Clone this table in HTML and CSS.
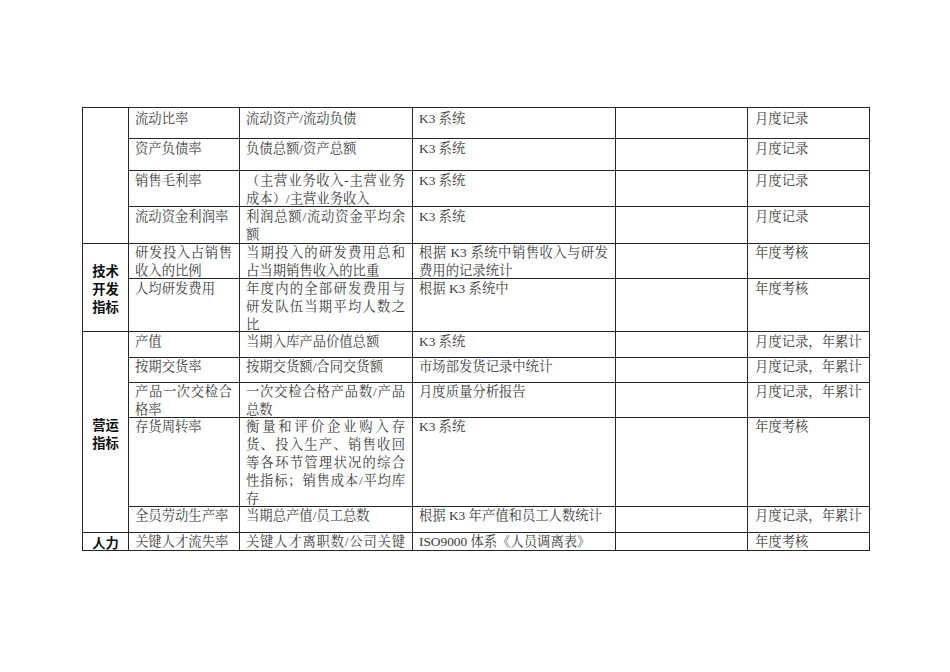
FILE: index.html
```html
<!DOCTYPE html>
<html lang="zh-CN">
<head>
<meta charset="utf-8">
<title>指标表</title>
<link rel="stylesheet" href="styles.css">
</head>
<body>
<div class="sheet">
  <div class="cell cat span4"></div>
  <div class="cell t1">流动比率</div>
  <div class="cell t1">流动资产/流动负债</div>
  <div class="cell t1">K3 系统</div>
  <div class="cell t1"></div>
  <div class="cell t1 last">月度记录</div>

  <div class="cell">资产负债率</div>
  <div class="cell">负债总额/资产总额</div>
  <div class="cell">K3 系统</div>
  <div class="cell"></div>
  <div class="cell last">月度记录</div>

  <div class="cell">销售毛利率</div>
  <div class="cell">（主营业务收入-主营业务成本）/主营业务收入</div>
  <div class="cell">K3 系统</div>
  <div class="cell"></div>
  <div class="cell last">月度记录</div>

  <div class="cell">流动资金利润率</div>
  <div class="cell">利润总额/流动资金平均余额</div>
  <div class="cell">K3 系统</div>
  <div class="cell"></div>
  <div class="cell last">月度记录</div>

  <div class="cell cat span2">技术开发指标</div>
  <div class="cell tight">研发投入占销售收入的比例</div>
  <div class="cell tight">当期投入的研发费用总和占当期销售收入的比重</div>
  <div class="cell tight">根据 K3 系统中销售收入与研发费用的记录统计</div>
  <div class="cell tight"></div>
  <div class="cell tight last">年度考核</div>

  <div class="cell">人均研发费用</div>
  <div class="cell">年度内的全部研发费用与研发队伍当期平均人数之比</div>
  <div class="cell">根据 K3 系统中</div>
  <div class="cell"></div>
  <div class="cell last">年度考核</div>

  <div class="cell cat span5">营运指标</div>
  <div class="cell">产值</div>
  <div class="cell">当期入库产品价值总额</div>
  <div class="cell">K3 系统</div>
  <div class="cell"></div>
  <div class="cell last">月度记录，年累计</div>

  <div class="cell tight">按期交货率</div>
  <div class="cell tight">按期交货额/合同交货额</div>
  <div class="cell tight">市场部发货记录中统计</div>
  <div class="cell tight"></div>
  <div class="cell tight last">月度记录，年累计</div>

  <div class="cell tight">产品一次交检合格率</div>
  <div class="cell tight">一次交检合格产品数/产品总数</div>
  <div class="cell tight">月度质量分析报告</div>
  <div class="cell tight"></div>
  <div class="cell tight last">月度记录，年累计</div>

  <div class="cell tight">存货周转率</div>
  <div class="cell tight">衡量和评价企业购入存货、投入生产、销售收回等各环节管理状况的综合性指标；销售成本/平均库存</div>
  <div class="cell tight">K3 系统</div>
  <div class="cell tight"></div>
  <div class="cell tight last">年度考核</div>

  <div class="cell tight">全员劳动生产率</div>
  <div class="cell tight">当期总产值/员工总数</div>
  <div class="cell tight">根据 K3 年产值和员工人数统计</div>
  <div class="cell tight"></div>
  <div class="cell tight last">月度记录，年累计</div>

  <div class="cell cat cut">人力</div>
  <div class="cell tight cut">关键人才流失率</div>
  <div class="cell tight cut fill">关键人才离职数/公司关键</div>
  <div class="cell tight cut">ISO9000 体系《人员调离表》</div>
  <div class="cell tight cut"></div>
  <div class="cell tight cut last">年度考核</div>
</div>
</body>
</html>
```

FILE: styles.css
```css
html, body {
  margin: 0;
  padding: 0;
  background: #ffffff;
}

body {
  font-family: "Liberation Serif", "Noto Serif CJK SC", "Noto Sans CJK SC", serif;
  font-size: 13.33px;
  line-height: 18px;
  color: #3a3a3a;
}

.sheet {
  display: grid;
  grid-template-columns: 46px 111px 173px 203px 132px 122px;
  grid-template-rows: 31px 32px 36px 37px 35px 53px 26px 25px 35px 89px 26px 18px;
  width: 788px;
  box-sizing: border-box;
  margin: 107px 0 0 82px;
  border-top: 1px solid #262626;
  border-left: 1px solid #262626;
}

.cell {
  box-sizing: border-box;
  border-right: 1px solid #262626;
  border-bottom: 1px solid #262626;
  padding: 1px 7px 0 6px;
  text-align: justify;
  min-width: 0;
  min-height: 0;
  overflow: visible;
}

.t1 {
  padding-top: 2px;
}

.tight {
  padding-top: 0;
}

.last {
  padding-left: 7px;
}

.cat {
  font-family: "Noto Sans CJK SC", sans-serif;
  font-weight: 700;
  color: #111;
  text-align: center;
  display: flex;
  align-items: center;
  justify-content: center;
  padding: 3px 5px 0 5px;
  line-height: 18px;
}

.span4 { grid-row: span 4; }
.span2 { grid-row: span 2; }
.span5 { grid-row: span 5; }

.cut {
  overflow: hidden;
}

.fill {
  text-align-last: justify;
}
```
